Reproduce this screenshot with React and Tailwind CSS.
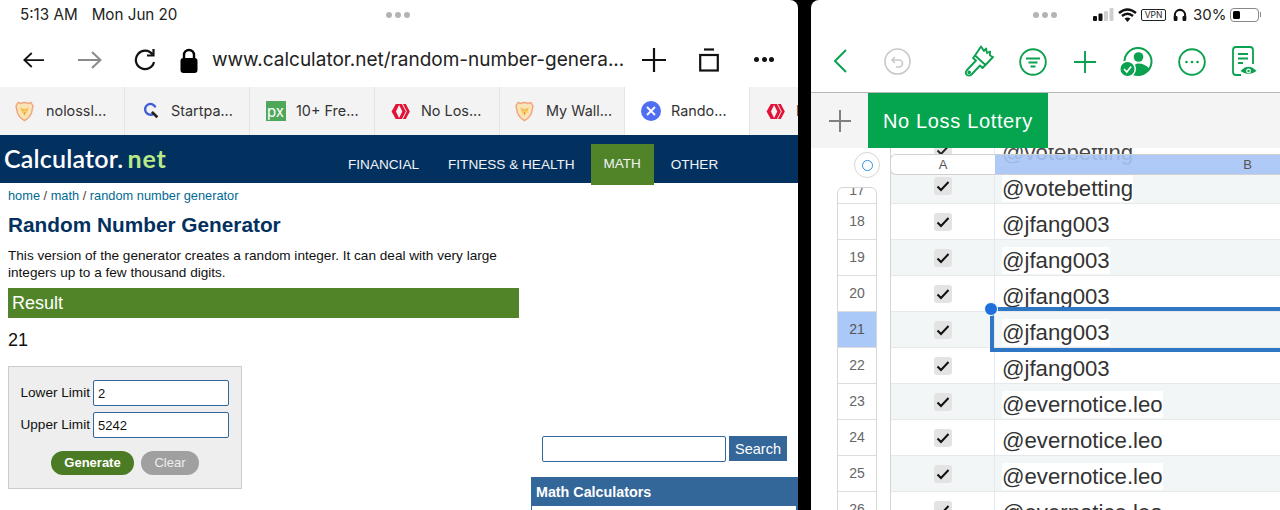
const sans = "font-['Liberation_Sans',Arial,sans-serif]";
const ui = "font-['Inter',sans-serif]";

const Hive = ({ size = 19 }) => (
  <svg width={size} height={size} viewBox="0 0 20 20" className="shrink-0">
    <path d="M5 2 L9 2 L5.2 10 L9 18 L5 18 L0.6 10 Z" fill="#e31337" />
    <path d="M8 2 L11.5 2 L15.6 10 L11.5 18 L8 18 L11.9 10 Z" fill="#e31337" />
    <path d="M12.6 2 L15.6 2 L19.8 10 L15.6 18 L12.6 18 L16.6 10 Z" fill="#e31337" />
  </svg>
);

const Lion = () => (
  <svg width="19" height="21" viewBox="0 0 19 21" className="shrink-0 -ml-[3px]">
    <path d="M3 1.5 L6 2.5 Q9.5 0.5 13 2.5 L16 1.5 L18 5 L16.5 12 Q14 17.5 9.5 19.5 Q5 17.5 2.5 12 L1 5 Z" fill="#fbe3b8" stroke="#f0a37a" strokeWidth="1.4" />
    <path d="M5 6 L8 8 L9.5 7 L11 8 L14 6 L12.5 11 L9.5 15 L6.5 11 Z" fill="#f6cf5e" />
    <path d="M6.5 8 L8.5 9.5 M12.5 8 L10.5 9.5 M9.5 11 V13.5" stroke="#ee8f6b" strokeWidth="1" fill="none" />
  </svg>
);

const Tab = ({ icon, label, active }) => (
  <div className={`w-[125px] h-full shrink-0 flex items-center gap-[10px] pl-[15px] border-r border-[#e4e4e4] ${active ? "bg-white" : "bg-[#f3f3f3]"}`}>
    <span className="w-[21px] flex justify-center shrink-0">{icon}</span>
    <span className="text-[14.4px] text-[#333] whitespace-nowrap">{label}</span>
  </div>
);

function Left() {
  return (
    <div className={`w-[798px] h-full bg-white rounded-tr-[8px] overflow-hidden flex flex-col shrink-0 ${ui}`}>
      <div className="h-[30px] relative flex items-center pl-[20px] text-[15.2px] text-[#222] gap-[14px]">
        <span>5:13 AM</span><span>Mon Jun 20</span>
        <div className="absolute left-[386px] top-[12px] flex gap-[3px]">
          <i className="w-[6px] h-[6px] rounded-full bg-[#b4b4b4]" /><i className="w-[6px] h-[6px] rounded-full bg-[#b4b4b4]" /><i className="w-[6px] h-[6px] rounded-full bg-[#b4b4b4]" />
        </div>
      </div>
      <div className="h-[57px] pt-[3px] flex items-center relative">
        <div className="w-[21px] ml-[23px] flex">
          <svg width="24" height="20" viewBox="0 0 24 20" fill="none" stroke="#111" strokeWidth="2"><path d="M24 10 H1.5 M10 2 L1.5 10 L10 18" /></svg>
        </div>
        <div className="ml-[34px] flex">
          <svg width="24" height="20" viewBox="0 0 24 20" fill="none" stroke="#8a8a8a" strokeWidth="2"><path d="M0 10 H22.5 M14 2 L22.5 10 L14 18" /></svg>
        </div>
        <div className="ml-[32px] flex">
          <svg width="22" height="24" viewBox="0 0 22 24" fill="none" stroke="#111" strokeWidth="2.2"><path d="M18.5 6.5 A9.2 9.2 0 1 0 20 14" /><path d="M19.5 1 V7.5 H13" /></svg>
        </div>
        <div className="ml-[24px] flex">
          <svg width="18" height="25" viewBox="0 0 18 25"><path d="M4 11 V7 A5 5 0 0 1 14 7 V11" fill="none" stroke="#000" strokeWidth="2.4" /><rect x="0.5" y="10" width="17" height="15" rx="3" fill="#000" /></svg>
        </div>
        <span className="ml-[14px] text-[19px] text-[#222] whitespace-nowrap w-[420px]">www.calculator.net/random-number-genera...</span>
        <div className="absolute left-[642px] top-[18px] flex">
          <svg width="24" height="24" viewBox="0 0 24 24" stroke="#111" strokeWidth="2.2"><path d="M12 0 V24 M0 12 H24" /></svg>
        </div>
        <div className="absolute left-[699px] top-[18px] flex">
          <svg width="20" height="24" viewBox="0 0 20 24" fill="none" stroke="#111" strokeWidth="2.2"><path d="M5 1.5 H15" /><rect x="1.2" y="7" width="17.6" height="15.5" /></svg>
        </div>
        <div className="absolute left-[754px] top-[27px] flex gap-[2.5px]">
          <i className="w-[5px] h-[5px] rounded-full bg-[#111]" /><i className="w-[5px] h-[5px] rounded-full bg-[#111]" /><i className="w-[5px] h-[5px] rounded-full bg-[#111]" />
        </div>
      </div>
      <div className="h-[48px] flex overflow-hidden">
        <Tab icon={<Lion />} label="nolossl..." />
        <Tab icon={
          <svg width="18" height="18" viewBox="0 0 20 20" fill="none"><path d="M15 6 A6 6 0 1 0 13 13" stroke="#3f5bd6" strokeWidth="2.6" /><path d="M11 11 L17 17" stroke="#222" strokeWidth="3" /></svg>
        } label="Startpa..." />
        <Tab icon={
          <span className="w-[20px] h-[20px] bg-[#4fa85a] flex items-center justify-center text-white text-[15px] leading-none">px</span>
        } label="10+ Fre..." />
        <Tab icon={<Hive />} label="No Los..." />
        <Tab icon={<Lion />} label="My Wall..." />
        <Tab active icon={
          <svg width="20" height="20" viewBox="0 0 20 20"><circle cx="10" cy="10" r="10" fill="#4f6ff0" /><path d="M6 6 L14 14 M14 6 L6 14" stroke="#fff" strokeWidth="1.8" /></svg>
        } label="Rando..." />
        <Tab icon={<Hive />} label="No Los..." />
      </div>
      <div className={`h-[48px] bg-[#03315f] relative flex items-start shrink-0 ${sans}`}>
        <div className="ml-[4px] mt-[9px] w-[340px] flex items-baseline text-[25px] leading-[28px] tracking-[0.2px] font-['Lato',sans-serif] font-semibold text-white">
          Calculator.<span className="ml-[4px] text-[#b8e986] font-bold tracking-[0.9px]">net</span>
        </div>
        <div className="flex h-full text-[13.6px] text-[#f0f4f8]">
          <span className="mt-[20px] ml-[4px]">FINANCIAL</span>
          <span className="mt-[20px] ml-[29px]">FITNESS &amp; HEALTH</span>
          <span className="mt-[9px] ml-[16px] w-[63px] h-[41px] bg-[#518428] flex items-center justify-center relative z-10">MATH</span>
          <span className="mt-[20px] ml-[17px]">OTHER</span>
        </div>
      </div>
      <div className={`flex-1 flex min-h-0 ${sans}`}>
        <div className="w-[531px] shrink-0 pl-[8px] pr-[12px]">
          <div className="mt-[5px] text-[12.8px] leading-[16px] text-[#006a93]">
            home <span className="text-[#5a3a30]">/</span> math <span className="text-[#5a3a30]">/</span> random number generator
          </div>
          <h1 className="mt-[8px] text-[20.8px] leading-[25px] font-bold text-[#03315f]">Random Number Generator</h1>
          <p className="mt-[11px] text-[13.6px] leading-[16.5px] text-[#111]">
            This version of the generator creates a random integer. It can deal with very large<br />integers up to a few thousand digits.
          </p>
          <div className="mt-[7px] h-[30px] bg-[#518428] text-white text-[18px] leading-[30px] pl-[4px]">Result</div>
          <div className="mt-[11px] text-[18px] leading-[22px] text-[#111]">21</div>
          <div className="mt-[15px] w-[234px] h-[123px] bg-[#eeeeee] border border-[#cccccc] pt-[13px]">
            <div className="flex items-center justify-end pr-[12px] gap-[3px] text-[13.6px] text-[#111]">
              <span className="pt-[1px]">Lower Limit</span>
              <div className="w-[136px] h-[26px] bg-white border border-[#336699] rounded-[2px] pl-[4px] text-[13px] leading-[25px]">2</div>
            </div>
            <div className="mt-[6px] flex items-center justify-end pr-[12px] gap-[3px] text-[13.6px] text-[#111]">
              <span className="pt-[1px]">Upper Limit</span>
              <div className="w-[136px] h-[26px] bg-white border border-[#336699] rounded-[2px] pl-[4px] text-[13px] leading-[25px]">5242</div>
            </div>
            <div className="mt-[13px] flex gap-[7px] pl-[42px]">
              <div className="w-[83px] h-[24px] rounded-full bg-[#4c7b25] text-white text-[13px] font-bold leading-[24px] text-center">Generate</div>
              <div className="w-[58px] h-[24px] rounded-full bg-[#a0a0a0] text-[#eeeeee] text-[13px] leading-[24px] text-center">Clear</div>
            </div>
          </div>
        </div>
        <div className="flex-1 min-w-0">
          <div className="mt-[253px] ml-[11px] flex gap-[3px]">
            <div className="w-[184px] h-[26px] bg-white border border-[#336699] rounded-[2px]" />
            <div className="w-[58px] h-[25px] bg-[#336699] text-white text-[14.5px] leading-[26px] text-center">Search</div>
          </div>
          <div className="mt-[15px] h-[60px] border border-[#336699] border-r-[2px]">
            <div className="h-[28px] bg-[#336699] text-white text-[14.3px] font-bold leading-[28px] pl-[4px]">Math Calculators</div>
          </div>
        </div>
      </div>
    </div>
  );
}

const rows = [
  [17, "@votebetting", true], [18, "@jfang003", false], [19, "@jfang003", true], [20, "@jfang003", false], [21, "@jfang003", true],
  [22, "@jfang003", false], [23, "@evernotice.leo", true], [24, "@evernotice.leo", false], [25, "@evernotice.leo", true], [26, "@evernotice.leo", false],
];

const Check = () => (
  <div className="w-[18px] h-[18px] rounded-[3px] bg-[#e3e3e3] flex items-center justify-center">
    <svg width="14" height="12" viewBox="0 0 14 12" fill="none" stroke="#111" strokeWidth="2"><path d="M1.5 6.5 L5 10 L12.5 2" /></svg>
  </div>
);

const Row = ({ text, tint }) => (
  <div className={`h-[36px] shrink-0 flex border-b border-[#e6e9e9] ${tint ? "bg-[#f3f6f6]" : "bg-white"}`}>
    <div className="w-[104px] shrink-0 flex items-center justify-center border-r border-[#e6e9e9]"><Check /></div>
    <div className="flex-1 pl-[7px] pt-[6px] flex items-center">
      <span className="bg-white text-[22.2px] leading-[27px] text-[#333]">{text}</span>
    </div>
  </div>
);

function Right() {
  return (
    <div className={`flex-1 min-w-0 h-full bg-white rounded-tl-[8px] overflow-hidden flex flex-col ${ui}`}>
      <div className="h-[30px] relative">
        <div className="absolute left-[222px] top-[12px] flex gap-[3px]">
          <i className="w-[6px] h-[6px] rounded-full bg-[#b4b4b4]" /><i className="w-[6px] h-[6px] rounded-full bg-[#b4b4b4]" /><i className="w-[6px] h-[6px] rounded-full bg-[#b4b4b4]" />
        </div>
        <div className="absolute left-[282px] top-[7px] flex items-center gap-[4px]">
          <svg width="21" height="13" viewBox="0 0 21 13"><rect x="0" y="8" width="4" height="5" rx="1" fill="#111" /><rect x="5.5" y="5.5" width="4" height="7.5" rx="1" fill="#111" /><rect x="11" y="3" width="4" height="10" rx="1" fill="#cfcfcf" /><rect x="16.5" y="0" width="4" height="13" rx="1" fill="#cfcfcf" /></svg>
          <svg width="19" height="14" viewBox="0 0 19 14" fill="none" stroke="#111" strokeWidth="2.4"><path d="M1 5 Q9.5 -2 18 5 M4 8 Q9.5 3.5 15 8" /><path d="M6.5 10.5 L9.5 14 L12.5 10.5 Q9.5 8.5 6.5 10.5 Z" fill="#111" stroke="none" /></svg>
          <span className="h-[12px] w-[25px] border border-[#222] rounded-[2px] text-[8.5px] leading-[10px] text-center text-[#222]">VPN</span>
          <svg width="14" height="14" viewBox="0 0 15 14" fill="none" stroke="#111" strokeWidth="2.2" className="ml-[3px]"><path d="M2 11 V7 A5.5 5.5 0 0 1 13 7 V11" /><rect x="0.8" y="8" width="4" height="5.5" rx="1.2" fill="#111" stroke="none" /><rect x="10.2" y="8" width="4" height="5.5" rx="1.2" fill="#111" stroke="none" /></svg>
          <span className="text-[15px] leading-none text-[#222] ml-[2px]">30%</span>
          <div className="flex items-center">
            <div className="w-[29px] h-[14px] border border-[#888] rounded-[4px] p-[2px]"><div className="w-[7px] h-full bg-black rounded-[1.5px]" /></div>
            <i className="w-[1px] h-[5px] bg-[#888] ml-[1px]" />
          </div>
        </div>
      </div>
      <div className="h-[63px] relative border-b border-[#b8b8b8] shrink-0">
        <div className="absolute left-[22px] top-[19px] flex">
          <svg width="14" height="24" viewBox="0 0 14 24" fill="none" stroke="#0aa14f" strokeWidth="2"><path d="M13 1 L2 12 L13 23" /></svg>
        </div>
        <div className="absolute left-[73px] top-[18px] flex">
          <svg width="27" height="27" viewBox="0 0 27 27" fill="none" stroke="#c9c9c9" strokeWidth="1.6"><circle cx="13.5" cy="13.5" r="12.5" /><path d="M11 9 L8 12 L11 15 M8 12 H15 A3.5 3.5 0 0 1 15 19 H12" /></svg>
        </div>
        <div className="absolute left-[153px] top-[15px] flex">
          <svg width="30" height="32" viewBox="0 0 30 32" fill="none" stroke="#0aa14f" strokeWidth="1.9" strokeLinejoin="round"><path d="M17 1.5 L20 6 L22 3.5 L23 8 L26 6.5 L26 10.5 L29 12 L21.5 20 L11 10.5 Z" /><path d="M11 10.5 L9 13 L12 15.5 L3 25 Q0.5 28 3 30 Q5.5 31.5 7.5 29.5 L16 20.5 L18.5 23 L21.5 20" /><circle cx="5.2" cy="27.3" r="0.9" fill="#0aa14f" /></svg>
        </div>
        <div className="absolute left-[208px] top-[18px] flex">
          <svg width="28" height="28" viewBox="0 0 28 28" fill="none" stroke="#0aa14f" strokeWidth="1.9"><circle cx="14" cy="14" r="12.8" /><path d="M7 10.5 H21 M9.5 14.5 H18.5 M11.5 18.5 H16.5" /></svg>
        </div>
        <div className="absolute left-[263px] top-[21px] flex">
          <svg width="22" height="22" viewBox="0 0 22 22" stroke="#0aa14f" strokeWidth="1.9"><path d="M11 0 V22 M0 11 H22" /></svg>
        </div>
        <div className="absolute left-[309px] top-[17px] flex">
          <svg width="33" height="30" viewBox="0 0 33 30"><circle cx="18" cy="14.5" r="13.5" fill="none" stroke="#0aa14f" strokeWidth="2" /><circle cx="18.5" cy="10" r="4.8" fill="#0aa14f" /><path d="M13 27 V21 Q14 16.5 18.5 16.5 Q25 16.5 29.5 22 Q25 28 18 28 Z" fill="#0aa14f" /><circle cx="7.5" cy="22" r="8.5" fill="#fff" /><circle cx="7.5" cy="22" r="7" fill="#0aa14f" /><path d="M4 22 L6.8 25 L11.2 19.5" fill="none" stroke="#fff" strokeWidth="1.7" /></svg>
        </div>
        <div className="absolute left-[367px] top-[18px] flex">
          <svg width="28" height="28" viewBox="0 0 28 28" fill="none" stroke="#0aa14f" strokeWidth="1.9"><circle cx="14" cy="14" r="12.8" /><circle cx="8.5" cy="14" r="1.3" fill="#0aa14f" stroke="none" /><circle cx="14" cy="14" r="1.3" fill="#0aa14f" stroke="none" /><circle cx="19.5" cy="14" r="1.3" fill="#0aa14f" stroke="none" /></svg>
        </div>
        <div className="absolute left-[421px] top-[16px] flex">
          <svg width="26" height="31" viewBox="0 0 26 31" fill="none" stroke="#0aa14f" strokeWidth="1.8"><path d="M9 29 H4 Q1 29 1 26 V4 Q1 1 4 1 H18 Q21 1 21 4 V18" /><path d="M6 8 H16 M6 12.5 H16 M6 17 H11" /><path d="M8.5 25 Q16.5 16.5 24.5 25 Q16.5 31 8.5 25 Z" fill="#0aa14f" stroke="none" /><circle cx="16.5" cy="25" r="2.4" fill="#fff" stroke="none" /><circle cx="16.5" cy="25" r="1.2" fill="#0aa14f" stroke="none" /></svg>
        </div>
      </div>
      <div className="h-[55px] shrink-0 bg-[#f4f4f4] flex">
        <div className="w-[57px] flex items-center justify-center">
          <svg width="22" height="22" viewBox="0 0 22 22" stroke="#808080" strokeWidth="2"><path d="M11 0 V22 M0 11 H22" /></svg>
        </div>
        <div className={`w-[180px] bg-[#04a54e] text-white text-[20px] leading-[56px] pl-[15px] tracking-[0.65px] ${sans}`}>No Loss Lottery</div>
      </div>
      <div className={`flex-1 min-h-0 flex relative overflow-hidden ${sans}`}>
        <div className="w-[79px] shrink-0 pl-[26px] bg-white">
          <div className="mt-[39px] w-[40px] border border-[#d6d6d6] rounded-t-[6px] bg-white text-[14px] text-[#666] text-center">
            <div className="h-[16px] border-b border-[#dddddd] overflow-hidden leading-[4px]">17</div>
            {[18, 19, 20, 21, 22, 23, 24, 25, 26].map((n) => (
              <div key={n} className={`h-[36px] flex items-center justify-center border-b border-[#dddddd] ${n === 21 ? "bg-[#aac8f8] text-[#555]" : ""}`}>{n}</div>
            ))}
          </div>
        </div>
        <div className="flex-1 min-w-0 border-l border-[#d4d4d4] flex flex-col">
          <div className="mt-[-16px] shrink-0 opacity-90"><Row text="@votebetting" tint={false} /></div>
          <div className="flex flex-col">
            {rows.map(([n, t, tint]) => <Row key={n} text={t} tint={tint} />)}
          </div>
        </div>
        {/* frozen column header */}
        <div className="absolute left-[79px] right-0 top-[6px] h-[21px] flex text-[13px] text-[#555] border border-[#d0d0d0] rounded-l-[6px] overflow-hidden border-r-0">
          <div className="w-[104px] shrink-0 bg-white/90 flex items-center justify-center">A</div>
          <div className="flex-1 bg-[#a6c4f5]/90 flex items-center justify-end pr-[28px]">B</div>
        </div>
        {/* corner select control */}
        <div className="absolute left-[43px] top-[4px] w-[26px] h-[26px] rounded-full bg-white border border-[#d6d6d6] flex items-center justify-center">
          <i className="w-[11px] h-[11px] rounded-full border-[1.5px] border-[#2f8fe8]" />
        </div>
        {/* selected-cell outline */}
        <div className="absolute left-[179px] right-[-5px] top-[159px] h-[45px] border-[4px] border-[#2f76c4]" />
        <div className="absolute left-[173px] top-[154px] w-[14px] h-[14px] rounded-full bg-[#1f6fdc] border-[1.5px] border-white" />
      </div>
    </div>
  );
}

export default function App() {
  return (
    <div className="w-[1280px] h-[510px] bg-black flex gap-[13px] overflow-hidden">
      <Left />
      <Right />
    </div>
  );
}
